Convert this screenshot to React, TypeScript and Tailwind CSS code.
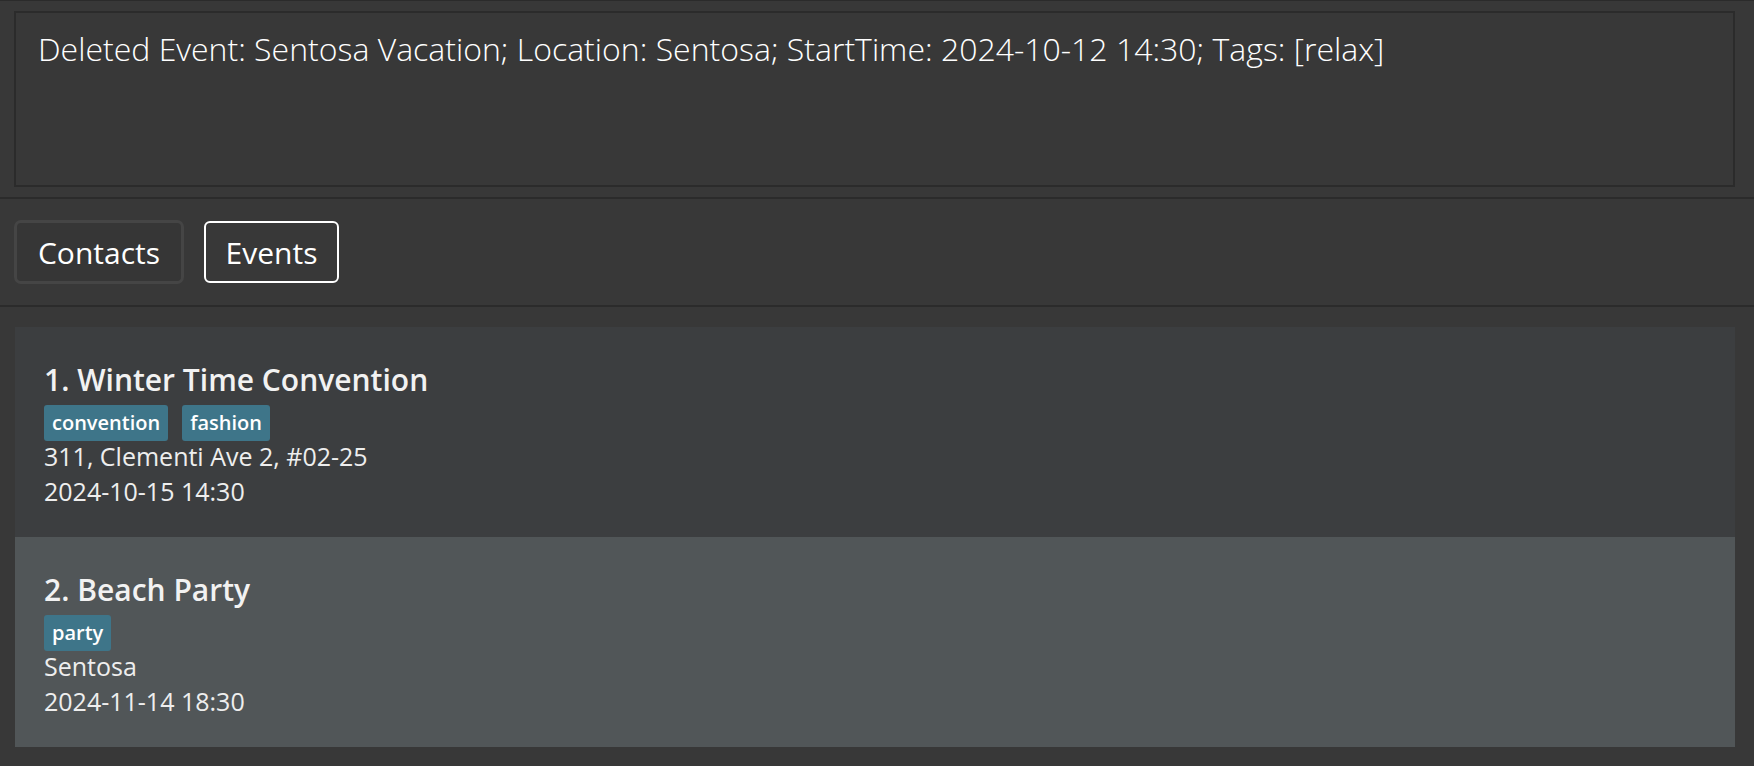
import React from 'react';

interface EventItem {
  name: string;
  tags: string[];
  location: string;
  time: string;
}

const events: EventItem[] = [
  {
    name: 'Winter Time Convention',
    tags: ['convention', 'fashion'],
    location: '311, Clementi Ave 2, #02-25',
    time: '2024-10-15 14:30',
  },
  {
    name: 'Beach Party',
    tags: ['party'],
    location: 'Sentosa',
    time: '2024-11-14 18:30',
  },
];

const font = { fontFamily: '"Open Sans", "Noto Sans", sans-serif' };

const EventCard: React.FC<{ item: EventItem; index: number; selected: boolean }> = ({
  item,
  index,
  selected,
}) => (
  <div
    className={`h-[210px] pl-[29px] pt-[33px] ${selected ? 'bg-[#515658]' : 'bg-[#3c3e40]'}`}
  >
    <div className="text-[30px] font-semibold leading-[40px] text-[#f2f2f2]">
      {index}. {item.name}
    </div>
    <div className="mt-[5px] mb-[-2px] flex gap-[14px]">
      {item.tags.map((tag) => (
        <span
          key={tag}
          className="h-[36px] rounded-[3px] bg-[#3e7589] px-[8px] text-[20px] font-semibold leading-[36px] text-white"
        >
          {tag}
        </span>
      ))}
    </div>
    <div className="text-[25px] leading-[35px] text-[#eeeeee]">{item.location}</div>
    <div className="text-[25px] leading-[35px] text-[#eeeeee]">{item.time}</div>
  </div>
);

export default function App() {
  return (
    <div className="flex h-[766px] w-full flex-col bg-[#383838]" style={font}>
      <div className="h-px bg-[#2b2b2b]" />
      <div className="pl-[14px] pr-[19px] pt-[10px] pb-[10px]">
        <div className="h-[176px] border-2 border-[#2b2b2b] px-[22px] pt-[14px]">
          <p className="text-[32px] font-light leading-[44px] text-white">
            Deleted Event: Sentosa Vacation; Location: Sentosa; StartTime: 2024-10-12 14:30; Tags: [relax]
          </p>
        </div>
      </div>
      <div className="h-[2px] bg-[#2b2b2b]" />
      <div className="flex h-[106px] items-center gap-[20px] pl-[14px]">
        <button className="h-[64px] w-[170px] rounded-[7px] border-[3px] border-[#454545] bg-[#363636] text-[30px] text-white">
          Contacts
        </button>
        <button className="h-[62px] w-[135px] rounded-[6px] border-2 border-white bg-[#383838] text-[30px] text-white">
          Events
        </button>
      </div>
      <div className="h-[2px] bg-[#2b2b2b]" />
      <div className="pl-[15px] pr-[19px] pt-[20px]">
        {events.map((item, i) => (
          <EventCard key={item.name} item={item} index={i + 1} selected={i === 1} />
        ))}
      </div>
    </div>
  );
}
